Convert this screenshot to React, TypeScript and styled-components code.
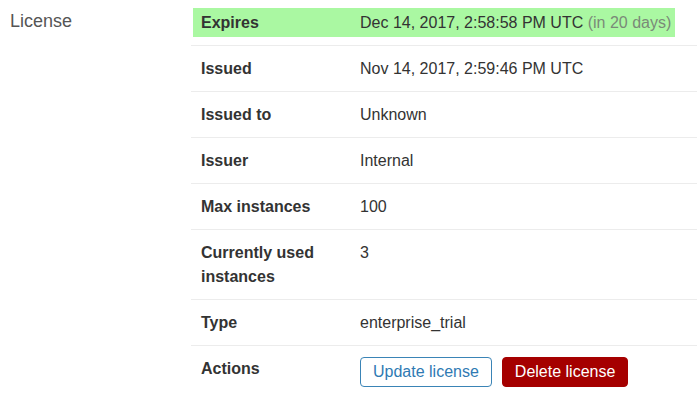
import React from "react";
import styled, { createGlobalStyle } from "styled-components";

const Global = createGlobalStyle`
  html, body { margin: 0; padding: 0; background: #fff; }
  body { font-family: "Liberation Sans", Arial, Helvetica, sans-serif; font-size: 16px; color: #333; }
`;

const Page = styled.div`
  display: flex;
  align-items: flex-start;
  padding-left: 10px;
  width: 697px;
  box-sizing: border-box;
  overflow: hidden;
`;

const SectionLabel = styled.div`
  width: 181px;
  flex: none;
  padding-top: 9px;
  line-height: 24px;
  font-size: 18px;
  color: #555;
`;

const Table = styled.div`
  flex: 1;
  min-width: 0;
`;

const Row = styled.div<{ $last?: boolean }>`
  display: grid;
  grid-template-columns: 159px 1fr;
  border-bottom: ${(p) => (p.$last ? "none" : "1px solid #ececec")};
`;

const HighlightRow = styled.div`
  padding: 8px 22px 8px 2px;
  border-bottom: 1px solid #ececec;
`;

const HighlightBox = styled.div`
  display: grid;
  grid-template-columns: 159px 1fr;
  background: #aaf8a2;
  padding: 3px 0 2px 8px;
  line-height: 24px;
`;

const Label = styled.div<{ $flush?: boolean }>`
  font-weight: bold;
  color: #333;
  line-height: 24px;
  padding: ${(p) => (p.$flush ? "0" : "11px 10px 10px 10px")};
`;

const Value = styled.div<{ $flush?: boolean }>`
  color: #333;
  line-height: 24px;
  padding: ${(p) => (p.$flush ? "0" : "11px 10px 10px 10px")};
  white-space: nowrap;
`;

const Muted = styled.span`
  color: #7a8a78;
`;

const Actions = styled.div`
  display: flex;
  gap: 10px;
`;

const Button = styled.button<{ $variant: "outline" | "danger" }>`
  font-family: "Liberation Sans", Arial, Helvetica, sans-serif;
  font-size: 16px;
  line-height: 22px;
  padding: 3px 12px;
  border-radius: 4px;
  cursor: pointer;
  border: 1px solid ${(p) => (p.$variant === "danger" ? "#a50000" : "#3a84b6")};
  background: ${(p) => (p.$variant === "danger" ? "#a50000" : "#fff")};
  color: ${(p) => (p.$variant === "danger" ? "#fff" : "#2f7ab3")};
`;

const rows: [string, React.ReactNode][] = [
  ["Issued", "Nov 14, 2017, 2:59:46 PM UTC"],
  ["Issued to", "Unknown"],
  ["Issuer", "Internal"],
  ["Max instances", "100"],
  ["Currently used instances", "3"],
  ["Type", "enterprise_trial"],
];

export default function App() {
  return (
    <>
      <Global />
      <Page>
        <SectionLabel>License</SectionLabel>
        <Table>
          <HighlightRow>
            <HighlightBox>
              <Label $flush>Expires</Label>
              <Value $flush>
                Dec 14, 2017, 2:58:58 PM UTC <Muted>(in 20 days)</Muted>
              </Value>
            </HighlightBox>
          </HighlightRow>
          {rows.map(([k, v]) => (
            <Row key={k}>
              <Label>{k}</Label>
              <Value>{v}</Value>
            </Row>
          ))}
          <Row $last>
            <Label>Actions</Label>
            <Value>
              <Actions>
                <Button $variant="outline">Update license</Button>
                <Button $variant="danger">Delete license</Button>
              </Actions>
            </Value>
          </Row>
        </Table>
      </Page>
    </>
  );
}
